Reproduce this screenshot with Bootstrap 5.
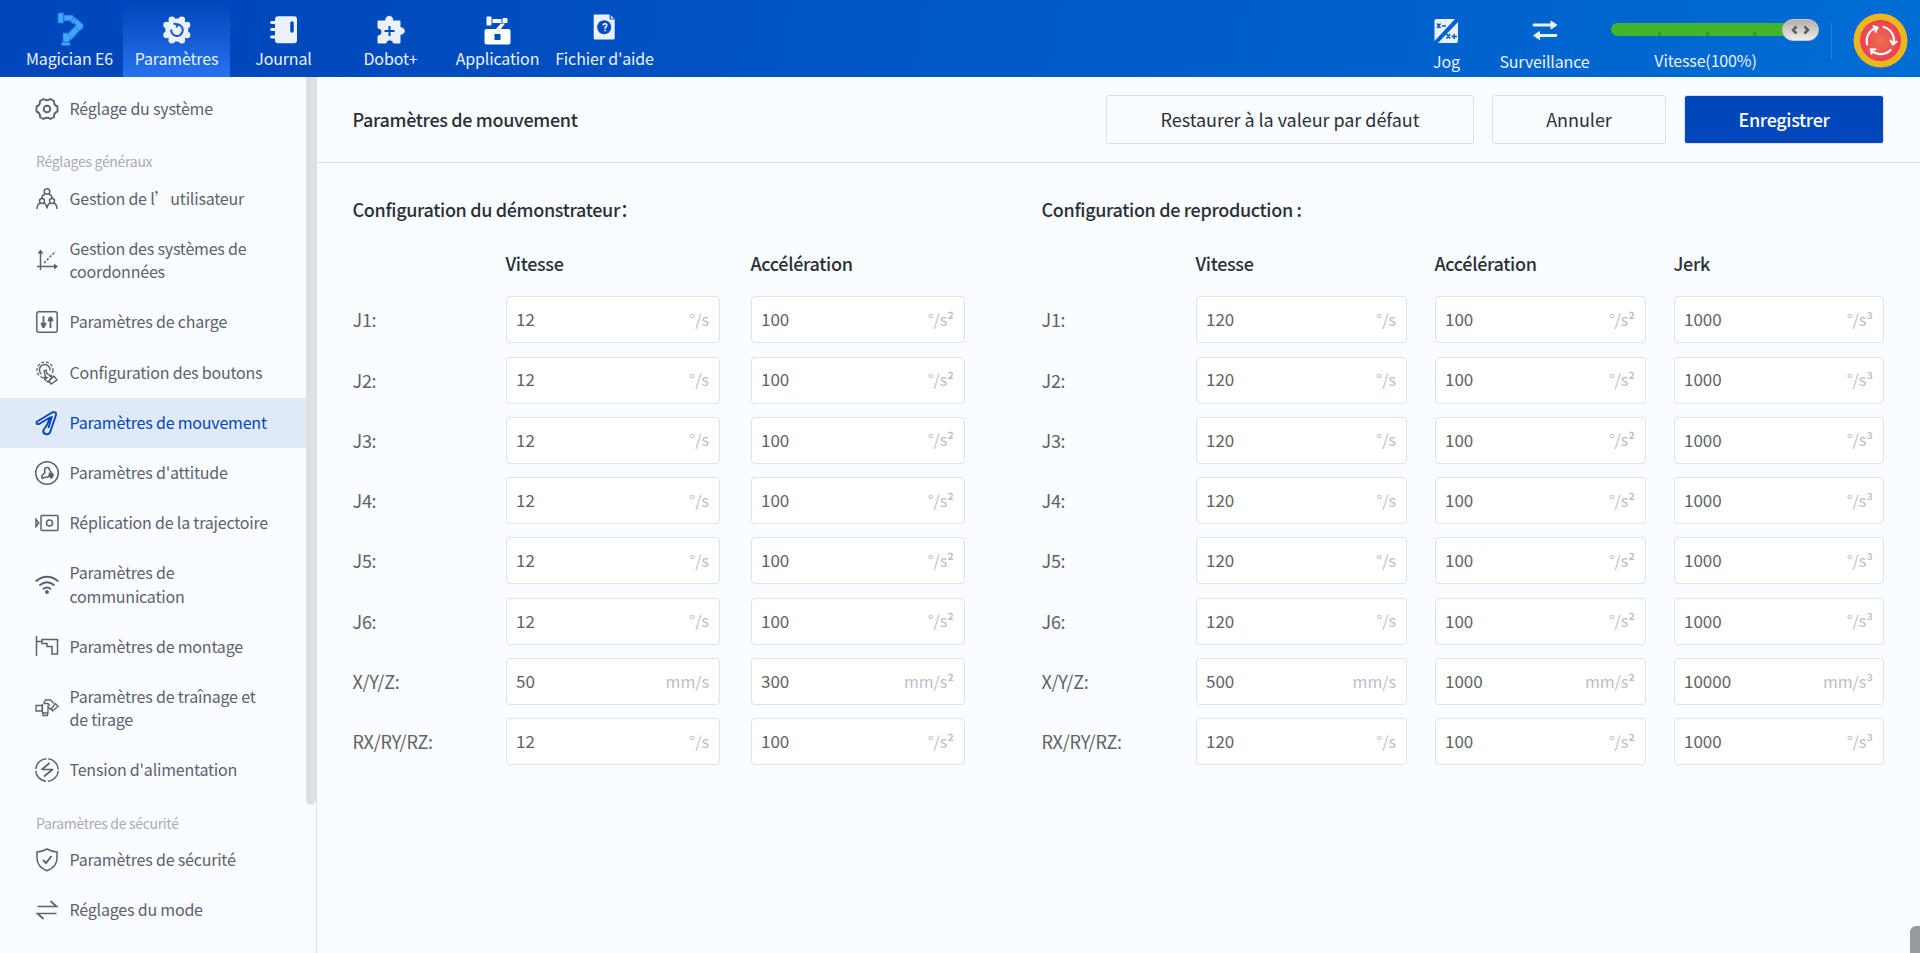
<!DOCTYPE html>
<html lang="fr">
<head>
<meta charset="utf-8">
<title>Paramètres de mouvement</title>
<link href="https://cdn.jsdelivr.net/npm/bootstrap@5.3.0/dist/css/bootstrap.min.css" rel="stylesheet">
<style>
body{font-family:"Noto Sans CJK SC","Noto Sans",sans-serif;background:#fafdff;color:#606266;height:100vh;overflow:hidden;line-height:1.4}
svg{overflow:visible}
.topbar{height:77px;background:linear-gradient(100deg,#0047bb 0%,#0047bb 12%,#006dd4 100%);color:#ebf1fb;font-size:16px;letter-spacing:-.15px;padding-left:16px}
.tab-item{width:107px;height:77px;padding-top:15px;line-height:24px;white-space:nowrap}
.tab-item.active{background:linear-gradient(#0047bb 5%,#2672ef)}
.tab-item svg,.tool-item svg{height:30px;display:block;flex:none}
.tab-item span{margin-top:1px}
.tool-item{padding-top:15px;line-height:24px}
.tool-item span{margin-top:4px}
.speed{width:209px;margin-left:8px;padding-top:19px}
.speed-track{height:13px;width:190px;margin-top:4px;border-radius:7px;background:#41b62d}
.speed-track i{position:absolute;bottom:0;width:3px;height:4px;background:#329a25}
.speed-knob{position:absolute;left:171px;top:-4px;width:37px;height:22px;border-radius:11px;background:linear-gradient(#b3aeaa,#eeedeb);border:1px solid #c9c6c4}
.speed-text{line-height:24px;margin-top:12px;text-align:center;padding-right:19px}
.split{width:1px;height:36px;background:#2f80dc;margin:23px 21px 0 11px}
.side{width:317px;border-right:1px solid #dcdfe6;font-size:16px;letter-spacing:-.2px;line-height:23.4px;padding-top:7px;color:#5d6070;height:876px}
.side-item{height:50px;padding-left:35px;color:#5d6070;text-decoration:none;width:306px}
.side-item.tall{height:73.5px}
.side-item.taller{height:50.4px}
.side-item.active{background:#e0e9f8;color:#0047bb}
.side-item svg{width:24px;height:24px;margin-right:10.500px;flex:none;fill:none;stroke:currentColor;stroke-width:1.5}
.side-label{height:39.5px;padding:16px 0 0 36px;font-size:14px;letter-spacing:-.3px;color:#a7abb8}
.side-bar{position:absolute;left:306px;top:0;width:10px;height:728px;background:#dde0e3;border-radius:0 0 5px 5px}
.page-head{height:86px;border-bottom:1px solid #dcdfe6;padding:0 36px 0 35.500px;gap:18px}
.head-title{font-size:18px;letter-spacing:-.34px;font-weight:500;color:#2b2f38}
.btn-box{height:49px;border:1px solid #dcdfe6;border-radius:3px;font-size:18px;letter-spacing:-.05px;color:#2b2f38;background:#fafdff;padding:0}
.btn-save{background:#0047bb;color:#fff;font-weight:500;letter-spacing:-.35px}
.conf-title{font-size:18px;letter-spacing:-.34px;font-weight:500;color:#2b2f38;line-height:26px;padding-top:33px;height:86px;margin-left:-.5px}
.conf-grid{display:grid;row-gap:13.300px;align-items:center}
.grid-a{grid-template-columns:122px 214px 214px;column-gap:31px}
.grid-b{grid-template-columns:126px 211px 211px 210px;column-gap:28px}
.col-name{font-size:18px;letter-spacing:-.34px;font-weight:500;color:#2b2f38;height:34px;line-height:28px;margin-left:-.5px}
.row-name{font-size:18px;letter-spacing:-.25px;margin-left:-.5px}
.field{height:47px;border:1px solid #dfe2e8;border-radius:4px;background:#fff;padding:0 10px 1.500px 9px;font-size:17px;color:#606266}
.field b{font-weight:400;font-size:16px;color:#babec8}
.field b i{font-style:normal;font-weight:500}
.corner{position:absolute;right:0;bottom:0;width:10px;height:27px;background:#98999b;border-radius:6px 0 0 0}
</style>
</head>
<body>
<header class="topbar d-flex">
  <div class="tab-item d-flex flex-column align-items-center"><svg width="30" viewBox="0 0 30 30"><g transform="translate(0,-1)" fill="#40a5ff" stroke="#1d78dc" stroke-width=".7" stroke-linejoin="round"><path d="M9 1.200h9v5.500H9z"/><path d="M3-1h5.500v10H3z"/><path d="M18 2.500l4.500 3-5 4-2.500-2.500 3-1z"/><path d="M22.500 5.500l5.500 5v3.500l-4 3-5-4 2.500-1.500-3.500-3z"/><path d="M19.500 13l4.500 4-8 9-4.500-5z"/><path d="M8 19h4l4 4-2 5H8z"/><path d="M6.500 28.500h8.500v3H6.500z"/></g></svg><span>Magician E6</span></div>
  <div class="tab-item active d-flex flex-column align-items-center"><svg width="30" viewBox="0 0 30 30"><g fill="#ebf1fb"><circle cx="14.800" cy="15" r="11.500"/><circle cx="19.800" cy="4.800" r="3.300"/><circle cx="9.800" cy="4.800" r="3.300"/><circle cx="25" cy="10" r="3.300"/><circle cx="4.600" cy="10" r="3.300"/><circle cx="25" cy="20" r="3.300"/><circle cx="4.600" cy="20" r="3.300"/><circle cx="19.800" cy="25.200" r="3.300"/><circle cx="9.800" cy="25.200" r="3.300"/></g><path d="M15 9.300a5.800 5.800 0 1 1-5.800 5.200M11.500 8.500l4 1-1 3" fill="none" stroke="#1557cc" stroke-width="2"/></svg><span>Paramètres</span></div>
  <div class="tab-item d-flex flex-column align-items-center"><svg width="30" viewBox="0 0 30 30"><rect x="6" y="1.200" width="22" height="27" rx="3" fill="#ebf1fb"/><path d="M2.500 7.500h5M2.500 14.500h5M2.500 22h5" stroke="#ebf1fb" stroke-width="2.800" stroke-linecap="round"/><path d="M23 8v8" stroke="#0047bb" stroke-width="3.500" stroke-linecap="round"/></svg><span>Journal</span></div>
  <div class="tab-item d-flex flex-column align-items-center"><svg width="30" viewBox="0 0 30 30"><path fill="#ebf1fb" stroke="#ebf1fb" stroke-linejoin="round" d="M2 6h8a3.500 3.500 0 1 1 6.500 0H24v7a3.200 3.200 0 1 1 0 6v9h-6.500a3.800 3.800 0 0 0-7.500 0H2v-7a3.800 3.800 0 0 0 0-8z"/><path d="M13.500 11v10M8.500 16h10" stroke="#0049bd" stroke-width="2"/></svg><span>Dobot+</span></div>
  <div class="tab-item d-flex flex-column align-items-center"><svg width="30" viewBox="0 0 30 30"><g fill="#fff" transform="translate(-.5,0)"><rect x="4" y="1.500" width="5" height="9" rx="1"/><rect x="10" y="4" width="9" height="4"/><rect x="20" y="3" width="5" height="5" rx="1"/><path d="M18.500 8.500h4l-5 6.500h-5z"/><path fill-rule="evenodd" d="M4 14h22a2 2 0 0 1 2 2v11.500a2 2 0 0 1-2 2H4a2 2 0 0 1-2-2V16a2 2 0 0 1 2-2zm8 5v6h6v-6z"/></g></svg><span>Application</span></div>
  <div class="tab-item d-flex flex-column align-items-center"><svg width="30" viewBox="0 0 30 30"><g transform="translate(-.8,0)"><path fill="#ebf1fb" d="M5-.5h15.500L25.500 4v19a1.500 1.500 0 0 1-1.500 1.500H6A1.500 1.500 0 0 1 4.500 23V0z"/><path d="M21-.5V3q0 1 1 1h3.500" fill="none" stroke="#004cc0" stroke-width="1.200"/><circle cx="15" cy="12.200" r="7" fill="#004cc0"/><path d="M14 10.500q0-1.700 1.800-1.700t1.800 1.700q0 1-1.600 2v1.300M16 14.800v1.400" fill="none" stroke="#fff" stroke-width="1.500"/></g></svg><span>Fichier d'aide</span></div>
  <div class="d-flex ms-auto" style="padding-right:12.5px">
    <div class="tool-item d-flex flex-column align-items-center" style="width:80px"><svg width="30" viewBox="0 0 30 30"><g transform="translate(-1,0)"><path fill="#ebf1fb" d="M5 4h19L3.500 26V6a2 2 0 0 1 1.500-2zM27 7v19a2 2 0 0 1-2 2H7z"/><path d="M6 8.500l3.500 4.500M9.500 8.500L6 13M11 11h4M15.500 19l3.500 4.500M19 19l-3.500 4.500M20.500 21.500H26M23.200 19v5" stroke="#0057c6" stroke-width="1.500"/></g></svg><span>Jog</span></div>
    <div class="tool-item d-flex flex-column align-items-center" style="width:116px"><svg width="30" viewBox="0 0 30 30"><path fill="none" stroke="#ebf1fb" stroke-width="2.800" stroke-linecap="round" d="M4 10h19M7 20.500h19"/><path fill="#ebf1fb" stroke="#ebf1fb" stroke-linejoin="round" d="M21 6l6 4-6 4zM9.500 16.500L3.500 20.500l6 4z"/></svg><span>Surveillance</span></div>
    <div class="speed"><div class="speed-track position-relative"><i style="left:47px"></i><i style="left:95px"></i><i style="left:142px"></i><div class="speed-knob"><svg class="d-block" width="35" height="20" fill="none" stroke="#5e5b59" stroke-width="2.500"><path d="M13.500 6.500L10 10l3.500 3.500M21.500 6.500L25 10l-3.500 3.500"/></svg></div></div><div class="speed-text">Vitesse(100%)</div></div>
    <div class="split"></div>
    <svg width="55" height="55" viewBox="-27.500 -27.500 55 55" style="margin-top:13px"><defs><radialGradient id="red"><stop offset="0" stop-color="#ec6e50"/><stop offset=".7" stop-color="#ee4f52"/><stop offset="1" stop-color="#ee3d55"/></radialGradient></defs><circle r="27" fill="#eab71f"/><circle r="20.500" fill="url(#red)"/><g fill="none" stroke="#fff" stroke-width="2.200" stroke-linecap="round"><path id="arc" d="M-13.300 4A13.800 13.800 0 0 1-4-12.800M-7-14.300l4 1.500-2 4"/><use href="#arc" transform="rotate(120)"/><use href="#arc" transform="rotate(240)"/></g></svg>
  </div>
</header>
<div class="d-flex">
<nav class="side flex-shrink-0 position-relative">
  <a class="side-item d-flex align-items-center"><svg viewBox="0 0 24 24"><path stroke-width="1.900" stroke-linejoin="round" d="M8.500 2q3.500 2.500 7 0l3.500 2q-.5 4 3.500 5.500v5q-4 1.500-3.500 5.500l-3.500 2q-3.500-2.500-7 0L5 20q.5-4-3.500-5.500v-5Q5.500 8 5 4z"/><circle cx="12" cy="12" r="3.300" stroke-width="1.900"/></svg><span>Réglage du système</span></a>
  <div class="side-label">Réglages généraux</div>
  <a class="side-item d-flex align-items-center"><svg viewBox="0 0 24 24"><circle cx="12" cy="4.500" r="2.800"/><circle cx="7" cy="14" r="2.500"/><circle cx="17" cy="14" r="2.500"/><path d="M10 7Q6.500 9 6.800 11.500M14 7q3.500 2 3.200 4.500M2 22q0-5 3.500-6M8.500 16q3 1 3.500 5.500Q12.500 17 15.500 16M18.500 16q3.500 1 3.500 6"/></svg><span>Gestion de l<span lang="zh-CN">’</span>utilisateur</span></a>
  <a class="side-item tall d-flex align-items-center"><svg viewBox="0 0 24 24"><path d="M5.500 4v18M2 18.500h18"/><path fill="currentColor" stroke="none" d="M2.500 5.500l3-4 3 4zM19 15.500l4 3-4 3z"/><path d="M9 15L20.500 3.500" stroke-dasharray="2.500 1.500"/></svg><span>Gestion des systèmes de<br>coordonnées</span></a>
  <a class="side-item taller d-flex align-items-center"><svg viewBox="0 0 24 24"><rect x="1.800" y="1.800" width="20.400" height="20.400" rx="2"/><path stroke-width="1.800" d="M8.500 6v12M15.500 7v11"/><path fill="currentColor" d="M6.500 13.500h4l-1 3h-2zM13.500 10.500h4l-1-3h-2z"/></svg><span>Paramètres de charge</span></a>
  <a class="side-item taller d-flex align-items-center"><svg viewBox="0 0 24 24"><circle cx="10" cy="9" r="8" stroke-dasharray="3 1.800" stroke-width="1.300"/><path stroke-width="1.400" d="M6.500 13A5.300 5.300 0 1 1 15 9.500M9 10l2 7-2-.5q0 2 4 4.500l4-5-5-3.500-1-3.500zM14 20l5-5 3 4-6 4z"/></svg><span>Configuration des boutons</span></a>
  <a class="side-item active d-flex align-items-center"><svg viewBox="0 0 24 24"><path stroke-width="1.900" stroke-linejoin="round" d="M1.500 11L17 1.500q4.500-1.500 4 2.500L15 21.500q-1.500 2.500-4.500 1.500T8.500 19l3.500-5 3-7.500-11 6.500q-3 .5-2.500-2zM17 5l-3.500 12"/></svg><span>Paramètres de mouvement</span></a>
  <a class="side-item d-flex align-items-center"><svg viewBox="0 0 24 24"><circle cx="12" cy="12" r="11.300"/><path d="M7.500 17.500q-1.500-1 0-3.500l2.500-2.500-.5-2Q9.500 6.500 12 6.500t2.500 2.500L18 14l-1 2-2-2.500-2 2.500-4 .5z"/><path fill="currentColor" d="M14.500 12.500l3.500 1.500-2 3-1.500-2z"/></svg><span>Paramètres d'attitude</span></a>
  <a class="side-item d-flex align-items-center"><svg viewBox="0 0 24 24"><rect x="6" y="4.500" width="17" height="15" rx="1"/><circle cx="14.500" cy="12" r="3"/><path d="M1 8.500v7l2.800-3.500z"/></svg><span>Réplication de la trajectoire</span></a>
  <a class="side-item tall d-flex align-items-center"><svg viewBox="0 0 24 24" stroke-linecap="round"><path stroke-width="1.900" d="M1.200 8Q12-.5 22.800 8M5 12q7-5.500 14 0M8.500 15.800q3.500-2.600 7 0"/><circle cx="12" cy="19" r="1.200" fill="currentColor"/></svg><span>Paramètres de<br>communication</span></a>
  <a class="side-item d-flex align-items-center"><svg viewBox="0 0 24 24"><path d="M1.500 2v20M2 7.500h5M7 5.500h15.500v14.500h-5.500v-7.500h-5v-3H7z"/></svg><span>Paramètres de montage</span></a>
  <a class="side-item tall d-flex align-items-center"><svg viewBox="0 0 24 24"><g stroke-width="1.300"><path d="M1 9.500h6v5.500H1zM7.500 8v9h5.500V9M8 17v2.500h4.500V17M8.500 7.500l2-3.500h5l3.500 3.500M9 7.500h4l2 2M13 11l3 2.500h1.500M16.500 12.500l4-5 2.500 3-5.500 4.500z"/></g></svg><span>Paramètres de traînage et<br>de tirage</span></a>
  <a class="side-item d-flex align-items-center"><svg viewBox="0 0 24 24"><circle cx="12" cy="12" r="11.300" stroke-dasharray="15.750 2" stroke-dashoffset="-1"/><path stroke-width="1.700" d="M14.500 5L7 11.500h10.500L9 18.500" stroke-linejoin="round"/></svg><span>Tension d'alimentation</span></a>
  <div class="side-label" style="height:40.3px;padding-top:17px">Paramètres de sécurité</div>
  <a class="side-item d-flex align-items-center"><svg viewBox="0 0 24 24"><path d="M12 1q5 2.800 10 3v6q0 9-10 12.800Q2 19 2 10V4q5-.2 10-3z"/><path stroke-width="1.900" d="M8 12l3 3 5.500-7"/></svg><span>Paramètres de sécurité</span></a>
  <a class="side-item d-flex align-items-center"><svg viewBox="0 0 24 24"><path stroke-width="1.700" d="M2.500 8.500h19l-6-5.500M21.500 15.500h-19l6 5.500"/></svg><span>Réglages du mode</span></a>
  <div class="side-bar"></div>
</nav>
<main class="flex-grow-1">
  <div class="page-head d-flex align-items-center">
    <div class="head-title me-auto">Paramètres de mouvement</div>
    <button class="btn btn-box" style="width:368px">Restaurer à la valeur par défaut</button>
    <button class="btn btn-box" style="width:174px">Annuler</button>
    <button class="btn btn-box btn-save" style="width:200px">Enregistrer</button>
  </div>
  <div class="d-flex" style="padding-left:36px;gap:77px">
    <section><div class="conf-title">Configuration du démonstrateur：</div><div class="conf-grid grid-a" id="teach"></div></section>
    <section><div class="conf-title">Configuration de reproduction :</div><div class="conf-grid grid-b" id="play"></div></section>
  </div>
</main>
</div>
<div class="corner"></div>
<script src="https://cdn.jsdelivr.net/npm/bootstrap@5.3.0/dist/js/bootstrap.bundle.min.js"></script>
<script>
const axes = ['J1','J2','J3','J4','J5','J6','X/Y/Z','RX/RY/RZ'];
const powers = ['', '²', '³'];
function fill(id, names, joint, linear) {
  let html = '<div></div>' + names.map(n => `<div class="col-name">${n}</div>`).join('');
  axes.forEach(a => {
    const lin = a === 'X/Y/Z';
    html += `<div class="row-name">${a}:</div>`;
    (lin ? linear : joint).forEach((v, i) => {
      html += `<div class="field d-flex align-items-center justify-content-between"><span>${v}</span><b>${lin ? 'mm' : '°'}/s<i>${powers[i]}</i></b></div>`;
    });
  });
  document.getElementById(id).innerHTML = html;
}
fill('teach', ['Vitesse', 'Accélération'], [12, 100], [50, 300]);
fill('play', ['Vitesse', 'Accélération', 'Jerk'], [120, 100, 1000], [500, 1000, 10000]);
</script>
</body>
</html>
